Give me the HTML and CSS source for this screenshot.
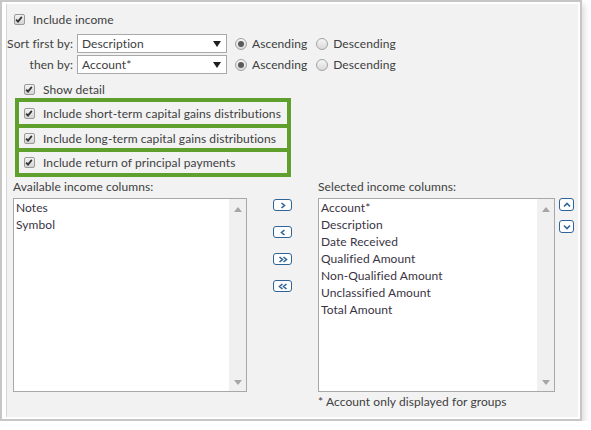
FILE: index.html
```html
<!DOCTYPE html>
<html>
<head>
<meta charset="utf-8">
<link rel="stylesheet" href="styles.css">
</head>
<body>
<div class="frame">
  <div class="panel">
    <div class="row row-income">
      <span class="cb"><svg viewBox="0 0 11 11" width="11" height="11"><path d="M2.3 5.6 L4.4 7.8 L8.6 2.6" /></svg></span>
      <span class="lbl">Include income</span>
    </div>

    <div class="sort">
      <span class="sort-label">Sort first by:</span>
      <div class="select"><span>Description</span><svg class="arr" viewBox="0 0 8 6" width="8" height="6"><polygon points="0,0 8,0 4,6" /></svg></div>
      <div class="radios">
        <span class="opt"><span class="rb on"></span><span>Ascending</span></span>
        <span class="opt"><span class="rb"></span><span>Descending</span></span>
      </div>

      <span class="sort-label">then by:</span>
      <div class="select"><span>Account*</span><svg class="arr" viewBox="0 0 8 6" width="8" height="6"><polygon points="0,0 8,0 4,6" /></svg></div>
      <div class="radios">
        <span class="opt"><span class="rb on"></span><span>Ascending</span></span>
        <span class="opt"><span class="rb"></span><span>Descending</span></span>
      </div>
    </div>

    <div class="row row-detail">
      <span class="cb"><svg viewBox="0 0 11 11" width="11" height="11"><path d="M2.3 5.6 L4.4 7.8 L8.6 2.6" /></svg></span>
      <span class="lbl">Show detail</span>
    </div>

    <div class="highlight">
      <div class="hrow h1">
        <span class="cb"><svg viewBox="0 0 11 11" width="11" height="11"><path d="M2.3 5.6 L4.4 7.8 L8.6 2.6" /></svg></span>
        <span class="lbl">Include short-term capital gains distributions</span>
      </div>
      <div class="hrow h2">
        <span class="cb"><svg viewBox="0 0 11 11" width="11" height="11"><path d="M2.3 5.6 L4.4 7.8 L8.6 2.6" /></svg></span>
        <span class="lbl">Include long-term capital gains distributions</span>
      </div>
      <div class="hrow h3">
        <span class="cb"><svg viewBox="0 0 11 11" width="11" height="11"><path d="M2.3 5.6 L4.4 7.8 L8.6 2.6" /></svg></span>
        <span class="lbl">Include return of principal payments</span>
      </div>
    </div>

    <div class="columns">
      <div class="col col-left">
        <div class="col-title">Available income columns:</div>
        <div class="list">
          <div class="items">
            <div class="item">Notes</div>
            <div class="item">Symbol</div>
          </div>
          <div class="scroll">
            <svg viewBox="0 0 8 5" width="8" height="5"><polygon points="4,0 8,5 0,5" /></svg>
            <svg viewBox="0 0 8 5" width="8" height="5"><polygon points="0,0 8,0 4,5" /></svg>
          </div>
        </div>
      </div>

      <div class="movers">
        <span class="mv"><svg viewBox="0 0 16 9" width="16" height="9"><path d="M6.5 2 L9.5 4.5 L6.5 7" /></svg></span>
        <span class="mv"><svg viewBox="0 0 16 9" width="16" height="9"><path d="M9.5 2 L6.5 4.5 L9.5 7" /></svg></span>
        <span class="mv"><svg viewBox="0 0 16 9" width="16" height="9"><path d="M4.5 2 L7.5 4.5 L4.5 7 M8.5 2 L11.5 4.5 L8.5 7" /></svg></span>
        <span class="mv"><svg viewBox="0 0 16 9" width="16" height="9"><path d="M7.5 2 L4.5 4.5 L7.5 7 M11.5 2 L8.5 4.5 L11.5 7" /></svg></span>
      </div>

      <div class="col col-right">
        <div class="col-title">Selected income columns:</div>
        <div class="list">
          <div class="items">
            <div class="item">Account*</div>
            <div class="item">Description</div>
            <div class="item">Date Received</div>
            <div class="item">Qualified Amount</div>
            <div class="item">Non-Qualified Amount</div>
            <div class="item">Unclassified Amount</div>
            <div class="item">Total Amount</div>
          </div>
          <div class="scroll">
            <svg viewBox="0 0 8 5" width="8" height="5"><polygon points="4,0 8,5 0,5" /></svg>
            <svg viewBox="0 0 8 5" width="8" height="5"><polygon points="0,0 8,0 4,5" /></svg>
          </div>
        </div>
        <div class="note">* Account only displayed for groups</div>
      </div>

      <div class="orders">
        <span class="ob"><svg viewBox="0 0 12 10" width="12" height="10"><path d="M3 6.5 L6 3.5 L9 6.5" /></svg></span>
        <span class="ob"><svg viewBox="0 0 12 10" width="12" height="10"><path d="M3 3.5 L6 6.5 L9 3.5" /></svg></span>
      </div>
    </div>
  </div>
</div>
</body>
</html>
```

FILE: styles.css
```css
* { box-sizing: border-box; }

html, body {
  margin: 0;
  padding: 0;
  background: #ffffff;
}

body {
  font-family: Lato, "Open Sans", sans-serif;
  font-size: 12px;
  letter-spacing: 0.08px;
  color: #404040;
}

.frame {
  width: 582px;
  height: 421px;
  border: 2px solid #c6c6c6;
  background: #ffffff;
  padding: 2px 2px 2px 4px;
  box-shadow: 3px 4px 6px rgba(0, 0, 0, 0.13);
}

.panel {
  height: 100%;
  background: #f2f2f2;
  border-left: 1px solid #d6d6d6;
  padding: 5px 0 0 0;
}

.row {
  display: flex;
  align-items: center;
  height: 20px;
}

.cb {
  width: 11px;
  height: 11px;
  flex: none;
  border: 1px solid #9a9a9a;
  border-radius: 2px;
  background: linear-gradient(#f2f2f2, #d4d4d4);
  display: flex;
}

.cb svg {
  margin: -1px 0 0 -1px;
}

.cb path {
  fill: none;
  stroke: #333333;
  stroke-width: 1.9;
}

.lbl {
  margin-left: 8px;
  white-space: nowrap;
}

.row-income {
  padding-left: 7px;
}

.sort {
  margin-top: 5px;
  display: grid;
  grid-template-columns: 66px 150px auto;
  grid-auto-rows: 19px;
  column-gap: 4px;
  row-gap: 2px;
  align-items: center;
}

.sort-label {
  text-align: right;
  white-space: nowrap;
}

.select {
  height: 19px;
  background: #ffffff;
  border: 1px solid #a9a9a9;
  display: flex;
  align-items: center;
  justify-content: space-between;
  padding: 0 5px 0 4px;
}

.arr polygon {
  fill: #1e1e1e;
}

.radios {
  display: flex;
  align-items: center;
  margin-left: 4px;
}

.opt {
  display: flex;
  align-items: center;
  margin-right: 9px;
}

.opt > span:last-child {
  margin-left: 5px;
}

.rb {
  width: 12px;
  height: 12px;
  border-radius: 50%;
  border: 1px solid #a3a3a3;
  background: linear-gradient(#f6f6f6, #d9d9d9);
  display: flex;
  align-items: center;
  justify-content: center;
}

.rb.on::after {
  content: "";
  width: 6px;
  height: 6px;
  border-radius: 50%;
  background: #5a5a5a;
}

.row-detail {
  margin-top: 6px;
  height: 18px;
  padding-left: 17px;
}

.highlight {
  margin-left: 8px;
  width: 276px;
  border: 4px solid #5fa02c;
}

.hrow {
  display: flex;
  align-items: center;
  padding-left: 5px;
}

.h1 { height: 22px; }
.h2 { height: 24px; border-top: 4px solid #5fa02c; }
.h3 { height: 25px; border-top: 4px solid #5fa02c; }

.columns {
  display: flex;
  align-items: flex-start;
  padding-left: 6px;
  margin-top: 1px;
}

.col-title {
  height: 18px;
  line-height: 18px;
  margin-bottom: 2px;
  white-space: nowrap;
}

.col-left { width: 234px; }
.col-right { width: 237px; }

.list {
  height: 194px;
  background: #ffffff;
  border: 1px solid #a8a8a8;
  display: flex;
}

.items {
  flex: 1;
  padding: 0 0 0 2px;
}

.item {
  height: 17px;
  line-height: 17px;
  white-space: nowrap;
  color: #3a3344;
}

.scroll {
  width: 17px;
  background: #f0f0f0;
  display: flex;
  flex-direction: column;
  justify-content: space-between;
  align-items: center;
  padding: 8px 0 6px 0;
}

.scroll polygon {
  fill: #a6a6a6;
}

.movers {
  width: 19px;
  margin: 21px 26px 0 26px;
  display: flex;
  flex-direction: column;
  gap: 15px;
}

.mv {
  width: 19px;
  height: 12px;
  border: 1.5px solid #2f649b;
  border-radius: 3px;
  background: #ffffff;
  display: flex;
  align-items: center;
  justify-content: center;
}

.mv svg {
  flex: none;
}

.mv path, .ob path {
  fill: none;
  stroke: #2f649b;
  stroke-width: 1.6;
}

.note {
  height: 18px;
  line-height: 18px;
  margin-top: 1px;
  white-space: nowrap;
}

.orders {
  margin: 20px 0 0 4px;
  display: flex;
  flex-direction: column;
  gap: 9px;
}

.ob {
  width: 15px;
  height: 13px;
  border: 1.5px solid #2f649b;
  border-radius: 3px;
  background: #ffffff;
  display: flex;
  align-items: center;
  justify-content: center;
}

.ob svg { flex: none; }
```
